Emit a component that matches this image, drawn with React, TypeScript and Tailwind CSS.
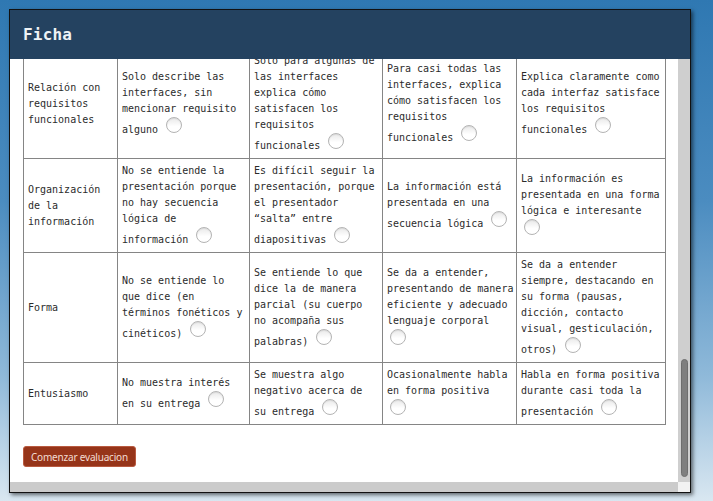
import React from 'react';

type Cell = string[];

interface Row {
    label: string[];
    cells: Cell[];
}

// each cell line is written out; the radio goes at the end of the last line
// (an empty last line means the radio sits alone on its own line)
const rows: Row[] = [
    {
        label: ['Relación con', 'requisitos', 'funcionales'],
        cells: [
            ['Solo describe las', 'interfaces, sin', 'mencionar requisito', 'alguno'],
            ['Solo para algunas de', 'las interfaces', 'explica cómo', 'satisfacen los', 'requisitos', 'funcionales'],
            ['Para casi todas las', 'interfaces, explica', 'cómo satisfacen los', 'requisitos', 'funcionales'],
            ['Explica claramente como', 'cada interfaz satisface', 'los requisitos', 'funcionales'],
        ],
    },
    {
        label: ['Organización', 'de la', 'información'],
        cells: [
            ['No se entiende la', 'presentación porque', 'no hay secuencia', 'lógica de', 'información'],
            ['Es difícil seguir la', 'presentación, porque', 'el presentador', '“salta” entre', 'diapositivas'],
            ['La información está', 'presentada en una', 'secuencia lógica'],
            ['La información es', 'presentada en una forma', 'lógica e interesante', ''],
        ],
    },
    {
        label: ['Forma'],
        cells: [
            ['No se entiende lo', 'que dice (en', 'términos fonéticos y', 'cinéticos)'],
            ['Se entiende lo que', 'dice la de manera', 'parcial (su cuerpo', 'no acompaña sus', 'palabras)'],
            ['Se da a entender,', 'presentando de manera', 'eficiente y adecuado', 'lenguaje corporal', ''],
            ['Se da a entender', 'siempre, destacando en', 'su forma (pausas,', 'dicción, contacto', 'visual, gesticulación,', 'otros)'],
        ],
    },
    {
        label: ['Entusiasmo'],
        cells: [
            ['No muestra interés', 'en su entrega'],
            ['Se muestra algo', 'negativo acerca de', 'su entrega'],
            ['Ocasionalmente habla', 'en forma positiva', ''],
            ['Habla en forma positiva', 'durante casi toda la', 'presentación'],
        ],
    },
];

function Radio({ alone }: { alone?: boolean }) {
    return (
        <span
            className={`inline-block w-[16px] h-[16px] rounded-full border border-[#b4b4b4] bg-[linear-gradient(#e9e9e9,#ffffff_60%)] shadow-[inset_0_1px_1px_rgba(0,0,0,0.08)] align-baseline ${alone ? 'ml-[3px]' : 'ml-[8px]'}`}
        />
    );
}

function RubricCell({ lines }: { lines: Cell }) {
    return (
        <td className="border border-[#858585] px-[4px] py-[4px] align-middle whitespace-nowrap">
            {lines.map((line, i) => {
                const last = i === lines.length - 1;
                return (
                    <React.Fragment key={i}>
                        {line}
                        {last ? <Radio alone={line === ''} /> : <br />}
                    </React.Fragment>
                );
            })}
        </td>
    );
}

export default function App() {
    return (
        <div className="w-[713px] h-[501px] overflow-hidden bg-[linear-gradient(180deg,#2f78b2_0%,#4b8cc0_40%,#8fb9d9_75%,#d9e7f1_100%)] pt-[9px] pl-[9px]">
            <div className="w-[682px] h-[484px] border border-[#111] shadow-[2px_2px_4px_rgba(0,0,0,0.55)] flex flex-col bg-white">
                {/* header */}
                <div className="h-[49px] shrink-0 bg-[#244260] flex items-center px-[13px]">
                    <h1 className="text-[16px] font-bold text-[#eef2f5] font-['DejaVu_Sans_Mono',monospace] tracking-[0.2px]">Ficha</h1>
                </div>

                {/* body with fake scrollbars */}
                <div className="flex-1 min-h-0 flex">
                    <div className="flex-1 min-w-0 overflow-hidden pl-[13px] font-['DejaVu_Sans_Mono',monospace] text-[10px] leading-[16px] text-[#2b2b2b]">
                        <table className="-mt-[11px] w-[642px] table-fixed border-collapse">
                            <colgroup>
                                <col className="w-[94px]" />
                                <col className="w-[132px]" />
                                <col className="w-[133px]" />
                                <col className="w-[134px]" />
                                <col className="w-[149px]" />
                            </colgroup>
                            <tbody>
                                {rows.map((row, r) => (
                                    <tr key={r}>
                                        <td className="border border-[#858585] px-[4px] py-[4px] align-middle whitespace-nowrap">
                                            {row.label.map((l, i) => (
                                                <React.Fragment key={i}>
                                                    {l}
                                                    {i < row.label.length - 1 && <br />}
                                                </React.Fragment>
                                            ))}
                                        </td>
                                        {row.cells.map((c, i) => (
                                            <RubricCell key={i} lines={c} />
                                        ))}
                                    </tr>
                                ))}
                            </tbody>
                        </table>

                        <button className="mt-[21px] h-[21px] px-[7px] rounded-[3px] border border-[#b95a40] bg-[#963419] text-[#f3dcd3] text-[10px] leading-none tracking-[-0.2px] font-['Noto_Sans',sans-serif]">
                            Comenzar evaluacion
                        </button>
                    </div>

                    <div className="w-[12px] shrink-0 bg-[#cfcfcf] relative">
                        <div className="absolute left-[3px] top-[300px] w-[7px] h-[118px] rounded-full bg-[#7f7f7f] border border-[#6e6e6e]" />
                    </div>
                </div>

                <div className="h-[10px] shrink-0 flex">
                    <div className="flex-1 bg-[#cbcbcb]" />
                    <div className="w-[12px] bg-[#f2f2f2]" />
                </div>
            </div>
        </div>
    );
}
